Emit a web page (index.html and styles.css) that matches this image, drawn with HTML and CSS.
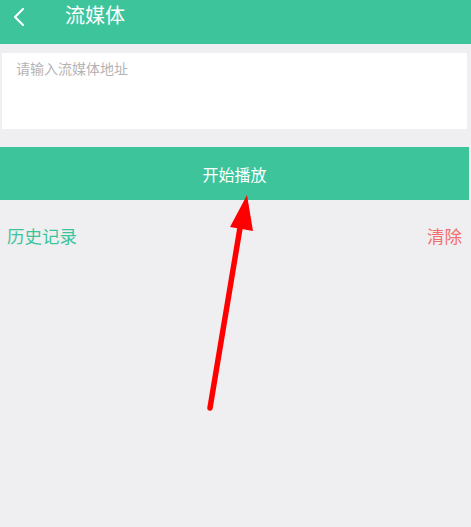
FILE: index.html
```html
<!DOCTYPE html>
<html lang="zh">
<head>
<meta charset="utf-8">
<link rel="stylesheet" href="styles.css">
</head>
<body>
<div class="page">
  <header class="topbar">
    <svg class="back" width="12" height="18" viewBox="0 0 12 18"><path d="M10 1 L2 9 L10 17" fill="none" stroke="#fff" stroke-width="2" stroke-linecap="round" stroke-linejoin="round"/></svg>
    <span class="title">流媒体</span>
  </header>
  <div class="inputbox">
    <span class="placeholder">请输入流媒体地址</span>
  </div>
  <div class="playbtn">开始播放</div>
  <div class="history">
    <span class="hist-label">历史记录</span>
    <span class="clear">清除</span>
  </div>
  <svg class="arrow" width="471" height="527" viewBox="0 0 471 527">
    <line x1="210" y1="408" x2="241" y2="222" stroke="#ff0000" stroke-width="5.5" stroke-linecap="round"/>
    <polygon points="247,195 230,227 253,231" fill="#ff0000"/>
  </svg>
</div>
</body>
</html>
```

FILE: styles.css
```css
html, body {
  margin: 0;
  padding: 0;
  background: #efeff1;
  font-family: "Noto Sans CJK SC", "Noto Sans", sans-serif;
}
.page {
  position: relative;
  width: 471px;
  height: 527px;
  overflow: hidden;
}
.topbar {
  height: 44px;
  background: #3ec49b;
  display: flex;
  align-items: flex-start;
  box-sizing: border-box;
}
.back {
  margin: 8px 0 0 13px;
}
.title {
  margin-left: 40px;
  color: #fff;
  font-size: 20px;
  line-height: 30px;
}
.inputbox {
  margin: 9px 4px 0 2px;
  height: 76px;
  background: #ffffff;
  box-sizing: border-box;
  padding: 2px 14px;
}
.placeholder {
  color: #b4b4b6;
  font-size: 14px;
  line-height: 24px;
}
.playbtn {
  margin-top: 18px;
  margin-right: 2px;
  height: 53px;
  background: #3ec49b;
  color: #fff;
  font-size: 16px;
  display: flex;
  align-items: center;
  justify-content: center;
}
.history {
  display: flex;
  justify-content: space-between;
  align-items: center;
  padding: 0 9px 0 7px;
  margin-top: 22px;
  height: 26px;
  font-size: 17.5px;
}
.hist-label {
  color: #3ec49b;
}
.clear {
  color: #f26f6f;
}
.arrow {
  position: absolute;
  left: 0;
  top: 0;
  pointer-events: none;
}
```
